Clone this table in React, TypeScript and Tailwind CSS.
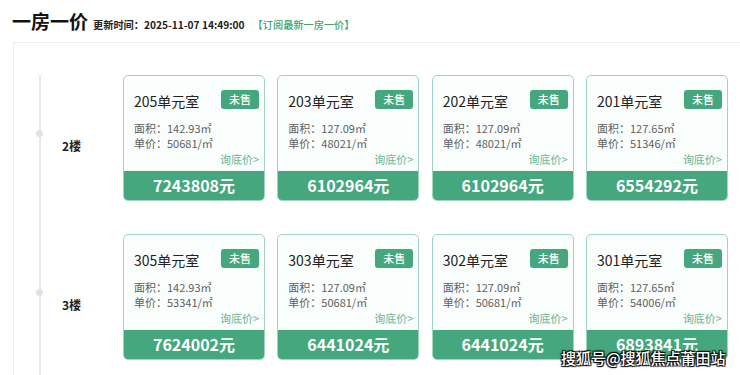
import React from "react";

type Unit = { name: string; area: string; price: string; total: string };

const floors: { label: string; units: Unit[] }[] = [
  {
    label: "2楼",
    units: [
      { name: "205单元室", area: "142.93", price: "50681", total: "7243808" },
      { name: "203单元室", area: "127.09", price: "48021", total: "6102964" },
      { name: "202单元室", area: "127.09", price: "48021", total: "6102964" },
      { name: "201单元室", area: "127.65", price: "51346", total: "6554292" },
    ],
  },
  {
    label: "3楼",
    units: [
      { name: "305单元室", area: "142.93", price: "53341", total: "7624002" },
      { name: "303单元室", area: "127.09", price: "50681", total: "6441024" },
      { name: "302单元室", area: "127.09", price: "50681", total: "6441024" },
      { name: "301单元室", area: "127.65", price: "54006", total: "6893841" },
    ],
  },
];

const font = { fontFamily: '"Noto Sans CJK SC", "Noto Sans", sans-serif' };

function Card({ u }: { u: Unit }) {
  return (
    <div className="w-[142px] h-[126px] rounded-[5px] border border-[#9fd6bf] bg-[#f9fdfc] overflow-hidden flex flex-col">
      <div className="flex-1 relative pl-[10px] pr-[5px]">
        <div className="flex items-start justify-between pt-[14px]">
          <div className="text-[14px] leading-[20px] text-[#222] pt-[1px]">{u.name}</div>
          <div className="w-[38px] h-[19px] rounded-[3px] bg-[#45a77d] text-white text-[11px] leading-[19px] text-center font-medium">
            未售
          </div>
        </div>
        <div className="mt-[10px] text-[11px] leading-[15px] text-[#5f5f5f]">
          <div>面积：{u.area}㎡</div>
          <div>单价：{u.price}/㎡</div>
        </div>
        <div className="text-right text-[11px] leading-[15px] text-[#6cb491] mt-[1px]">询底价&gt;</div>
      </div>
      <div className="h-[29px] bg-[#45a77d] text-white text-[16px] font-bold leading-[29px] text-center">
        {u.total}元
      </div>
    </div>
  );
}

export default function App() {
  return (
    <div className="relative w-[740px] h-[375px] overflow-hidden bg-white" style={font}>
      <div className="h-[42px] pl-[12px] pt-[7px] flex items-baseline">
        <span className="text-[19px] leading-[28px] font-bold text-[#111]">一房一价</span>
        <span className="ml-[5px] text-[10.2px] font-bold text-[#222]">更新时间：2025-11-07 14:49:00</span>
        <span className="ml-[8px] text-[10.2px] font-medium text-[#3da56d]">【订阅最新一房一价】</span>
      </div>
      <div className="ml-[13px] border-l border-t border-[#eeeeee] pt-[32px] pl-[25px]">
        <div className="border-l-2 border-[#e8e8e8]">
          {floors.map((f) => (
            <div key={f.label} className="flex pb-[33px]">
              <div className="relative w-[82px] flex items-center">
                <div className="absolute left-[-5px] top-[55px] w-[7px] h-[7px] rounded-full bg-[#e2e2e2]" />
                <div className="pl-[21px] mt-[16px] text-[12px] font-bold text-[#222]">{f.label}</div>
              </div>
              <div className="flex gap-x-[12.33px]">
                {f.units.map((u) => (
                  <Card key={u.name} u={u} />
                ))}
              </div>
            </div>
          ))}
        </div>
      </div>
      <div
        className="absolute left-[561px] top-[348px] text-[15px] leading-[20px] text-white font-medium whitespace-nowrap"
        style={{
          textShadow:
            "1px 1px 1px #000, -1px -1px 1px #000, 1px -1px 1px #000, -1px 1px 1px #000",
        }}
      >
        搜狐号@搜狐焦点莆田站
      </div>
    </div>
  );
}
